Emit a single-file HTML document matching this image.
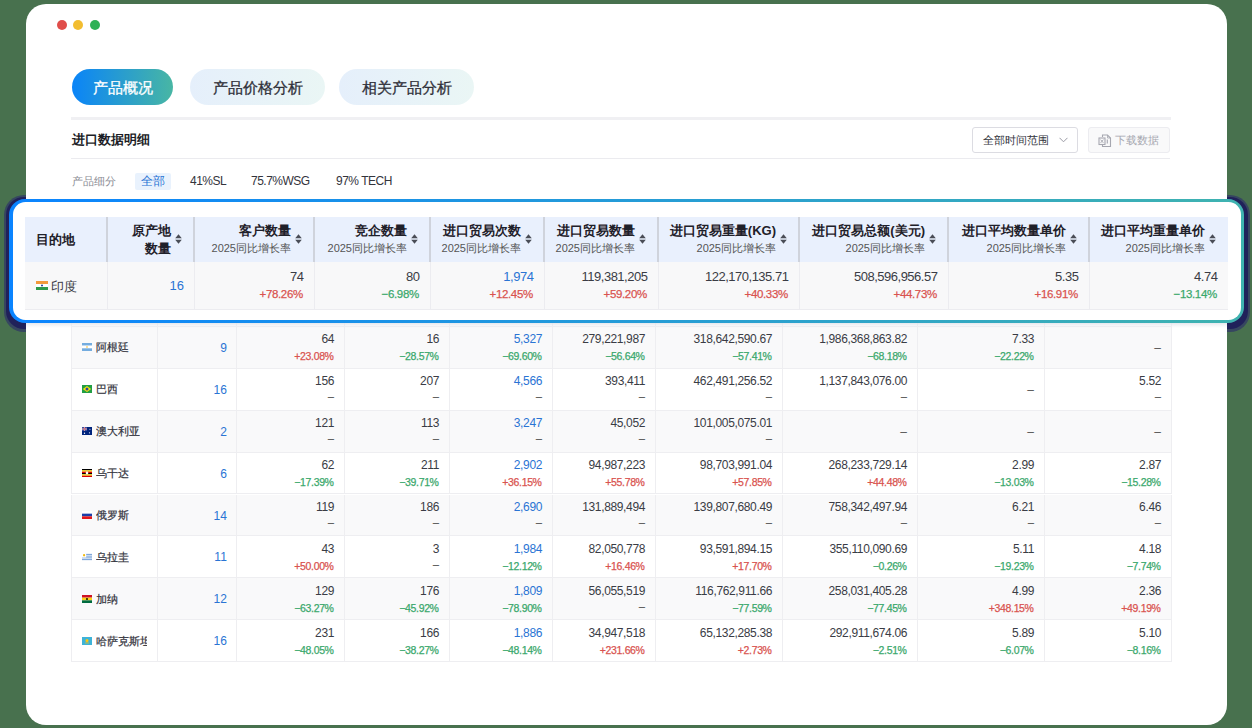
<!DOCTYPE html>
<html><head><meta charset="utf-8"><title>进口数据明细</title><style>
*{box-sizing:border-box}
html,body{margin:0;padding:0}
body{width:1252px;height:728px;background:#48714e;position:relative;overflow:hidden;font-family:"Liberation Sans",sans-serif;color:#33353d}
.card{position:absolute;left:26px;top:4px;width:1201px;height:721px;background:#fff;border-radius:20px;z-index:1}
.dot{position:absolute;top:20px;width:10px;height:10px;border-radius:50%;z-index:2}
.tab{position:absolute;top:69px;height:36px;border-radius:18px;font-size:15px;line-height:37.2px;text-align:center;z-index:2;color:#2f3039;-webkit-text-stroke:0.3px #2f3039}
.abs{position:absolute;z-index:2}
.ltab{position:absolute;z-index:2;background:#fff;border:1px solid #e9e9ee}
.lrow{position:absolute;left:71px;width:1100px;z-index:2;border-bottom:1px solid #eeeef1}
.vl{position:absolute;top:0;bottom:-1px;width:1px;background:#eeeef1}
.c{position:absolute;top:0;height:100%;text-align:right;padding-right:10px}
.n{position:absolute;right:9.95px;top:5.6px;font-size:12px;line-height:14px;color:#3a3c45;white-space:nowrap;letter-spacing:-0.35px}
.n.b{color:#2a74d4}
.p{position:absolute;right:10.4px;top:23.3px;font-size:10.5px;line-height:13px;white-space:nowrap;letter-spacing:-0.35px;-webkit-text-stroke:0.25px currentColor}
.p.r{color:#d9534f}.p.g{color:#3aa86c}.p.d{color:#555;margin-top:-1.5px}
.n1{position:absolute;right:10px;top:14px;font-size:12px;line-height:14px;color:#555}
.c0{position:absolute;top:0;height:100%;display:flex;align-items:center;padding-left:10px;white-space:nowrap;overflow:hidden;padding-right:10px}
.c0 .nm{font-size:11px;margin-left:3.5px;color:#33343d;overflow:hidden;-webkit-text-stroke:0.2px #33343d;position:relative;top:0.7px}
.c1{position:absolute;top:0;height:100%;text-align:right;padding-right:9.2px;font-size:12px;line-height:42px;color:#2a74d4}
.flag{display:block;flex:none}
.shadow{position:absolute;left:4px;top:195px;width:1246px;height:136.5px;border-radius:20px;background:#364660;z-index:0}
.shadow2{position:absolute;left:6px;top:196.5px;width:1241.5px;height:132px;border-radius:18px;background:#20215a;z-index:0}
.sband{position:absolute;left:26px;top:322px;width:1201px;height:6px;background:linear-gradient(rgba(222,225,232,0.9),rgba(235,237,242,0.5) 60%,rgba(240,242,246,0));z-index:2}
.hbox{position:absolute;left:9px;top:199px;width:1235px;height:124px;border-radius:16px;padding:3px 3.5px;background:linear-gradient(90deg,#0a84ff,#3fb3b0);z-index:3}
.hbox .in{width:100%;height:100%;background:#fff;border-radius:12.5px}
.hhead{position:absolute;z-index:4;background:#e9f0fd}
.hvl{position:absolute;top:0;height:100%;width:2px;background:#cfd3dc}
.h0{position:absolute;top:0;height:100%;line-height:45px;padding-left:11px;font-size:13px;font-weight:bold;color:#1f2029}
.h1,.hc{position:absolute;top:0;height:100%}
.ht2{position:absolute;right:23.5px;top:5px;font-size:13px;font-weight:bold;line-height:18px;text-align:right;color:#1f2029}
.ht{position:absolute;right:23px;top:5px;text-align:right;white-space:nowrap}
.ht b{display:block;font-size:13px;line-height:18px;color:#1f2029}
.hs{display:block;font-size:11px;line-height:17px;color:#555}
.si{position:absolute;right:12px;top:17px}
.hrow{position:absolute;z-index:4;background:#f8f8f9;border-bottom:1px solid #ececf0}
.rvl{position:absolute;top:0;height:100%;width:1px;background:#ececf0}
.hc0{position:absolute;top:0;height:100%;display:flex;align-items:center;padding-left:11px;white-space:nowrap}
.hc0 .nm{font-size:12.5px;margin-left:2.5px;color:#3a3c45;position:relative;top:1.5px}
.hc1{position:absolute;top:0;height:100%;text-align:right;padding-right:10px;font-size:13px;line-height:47px;color:#2a74d4}
.hcell{position:absolute;top:0;height:100%}
.hn{position:absolute;right:10.6px;top:6.7px;font-size:13px;line-height:16px;color:#3a3c45;white-space:nowrap;letter-spacing:-0.5px}
.hn.b{color:#2a74d4}
.hp{position:absolute;right:11.2px;top:25.3px;font-size:11.5px;line-height:14px;white-space:nowrap;letter-spacing:-0.35px;-webkit-text-stroke:0.25px currentColor}
.hp.r{color:#d9534f}.hp.g{color:#3aa86c}
</style></head>
<body>
<div class="shadow"></div><div class="shadow2"></div>
<div class="card"></div>
<div class="dot" style="left:57px;background:#e04e4a"></div>
<div class="dot" style="left:73px;background:#f2bd30"></div>
<div class="dot" style="left:90px;background:#2eb155"></div>
<div class="tab" style="left:72px;width:101px;background:linear-gradient(90deg,#0a84f8,#48b6a4);color:#fff;-webkit-text-stroke:0.3px #fff">产品概况</div>
<div class="tab" style="left:190px;width:135px;background:linear-gradient(90deg,#e5effb,#eaf6f5)">产品价格分析</div>
<div class="tab" style="left:339px;width:135px;background:linear-gradient(90deg,#e5effb,#eaf6f5)">相关产品分析</div>
<div class="abs" style="left:71px;top:117px;width:1100px;height:3px;background:#f0f0f3"></div>
<div class="abs" style="left:72px;top:130px;font-size:13px;font-weight:bold;line-height:20px;color:#1c1d26">进口数据明细</div>
<div class="abs" style="left:71px;top:158px;width:1099px;height:1px;background:#ebebef"></div>
<div class="abs" style="left:972px;top:127px;width:106px;height:26px;border:1px solid #dcdce2;border-radius:3px;background:#fff;font-size:11px;line-height:24px;padding-left:10px;color:#33343c">全部时间范围<svg style="position:absolute;left:86px;top:9px" width="9" height="6" viewBox="0 0 9 6"><path d="M0.5 0.8 L4.5 4.8 L8.5 0.8" fill="none" stroke="#9a9aa4" stroke-width="1"/></svg></div>
<div class="abs" style="left:1088px;top:127px;width:82px;height:26px;border:1px solid #ececf0;border-radius:3px;background:#f9f9fa;font-size:11px;line-height:24px;padding-left:26px;color:#a6a7b0"><svg style="position:absolute;left:9px;top:5.5px" width="14" height="14" viewBox="0 0 14 14"><path d="M4.5 3 V1 H9.5 L12.5 4 V12.5 H4.5 V11" fill="none" stroke="#a6a7b0" stroke-width="1.1"/><path d="M9.5 1 V4 H12.5" fill="none" stroke="#a6a7b0" stroke-width="0.8"/><rect x="1" y="4" width="6" height="6.5" fill="#f9f9fa" stroke="#a6a7b0" stroke-width="1.1"/><path d="M2.6 5.6 L5.4 8.9 M5.4 5.6 L2.6 8.9" stroke="#a6a7b0" stroke-width="0.9"/><path d="M9.3 5.5 V9.5" stroke="#a6a7b0" stroke-width="1.1"/></svg>下载数据</div>
<div class="abs" style="left:72px;top:173.8px;font-size:11px;line-height:14px;color:#8a8b93">产品细分</div>
<div class="abs" style="left:135px;top:173px;width:36px;height:17px;background:#e9f2fd;border-radius:2px;font-size:12px;line-height:17px;text-align:center;color:#2a74d4">全部</div>
<div class="abs" style="left:190px;top:174px;font-size:12px;line-height:14px;color:#33343c;letter-spacing:-0.5px">41%SL</div>
<div class="abs" style="left:251px;top:174px;font-size:12px;line-height:14px;color:#33343c;letter-spacing:-0.5px">75.7%WSG</div>
<div class="abs" style="left:336px;top:174px;font-size:12px;line-height:14px;color:#33343c;letter-spacing:-0.5px">97% TECH</div>
<div class="lrow" style="top:284.75px;height:41.95px;background:#fff">
<i class="vl" style="left:0px"></i>
<i class="vl" style="left:86px"></i>
<i class="vl" style="left:165px"></i>
<i class="vl" style="left:273px"></i>
<i class="vl" style="left:378px"></i>
<i class="vl" style="left:481px"></i>
<i class="vl" style="left:584px"></i>
<i class="vl" style="left:711px"></i>
<i class="vl" style="left:846px"></i>
<i class="vl" style="left:973px"></i>
<i class="vl" style="left:1100px"></i>
</div>
<div class="lrow" style="top:326.70px;height:41.95px;background:#f9f9fa">
<i class="vl" style="left:0px"></i>
<i class="vl" style="left:86px"></i>
<i class="vl" style="left:165px"></i>
<i class="vl" style="left:273px"></i>
<i class="vl" style="left:378px"></i>
<i class="vl" style="left:481px"></i>
<i class="vl" style="left:584px"></i>
<i class="vl" style="left:711px"></i>
<i class="vl" style="left:846px"></i>
<i class="vl" style="left:973px"></i>
<i class="vl" style="left:1100px"></i>
<div class="c0" style="left:1px;width:85px"><svg class="flag" width="10" height="8" viewBox="0 0 12 9" preserveAspectRatio="none"><rect width="12" height="3" fill="#74acdf"/><rect y="3" width="12" height="3" fill="#fff"/><rect y="6" width="12" height="3" fill="#74acdf"/><circle cx="6" cy="4.5" r="0.9" fill="#f6b40e"/></svg><span class="nm">阿根廷</span></div>
<div class="c1" style="left:86px;width:79px">9</div>
<div class="c" style="left:165px;width:108px"><span class="n">64</span><span class="p r">+23.08%</span></div>
<div class="c" style="left:273px;width:105px"><span class="n">16</span><span class="p g">−28.57%</span></div>
<div class="c" style="left:378px;width:103px"><span class="n b">5,327</span><span class="p g">−69.60%</span></div>
<div class="c" style="left:481px;width:103px"><span class="n">279,221,987</span><span class="p g">−56.64%</span></div>
<div class="c" style="left:584px;width:127px"><span class="n">318,642,590.67</span><span class="p g">−57.41%</span></div>
<div class="c" style="left:711px;width:135px"><span class="n">1,986,368,863.82</span><span class="p g">−68.18%</span></div>
<div class="c" style="left:846px;width:127px"><span class="n">7.33</span><span class="p g">−22.22%</span></div>
<div class="c" style="left:973px;width:127px"><span class="n1">–</span></div>
</div>
<div class="lrow" style="top:368.65px;height:41.95px;background:#ffffff">
<i class="vl" style="left:0px"></i>
<i class="vl" style="left:86px"></i>
<i class="vl" style="left:165px"></i>
<i class="vl" style="left:273px"></i>
<i class="vl" style="left:378px"></i>
<i class="vl" style="left:481px"></i>
<i class="vl" style="left:584px"></i>
<i class="vl" style="left:711px"></i>
<i class="vl" style="left:846px"></i>
<i class="vl" style="left:973px"></i>
<i class="vl" style="left:1100px"></i>
<div class="c0" style="left:1px;width:85px"><svg class="flag" width="10" height="8" viewBox="0 0 12 9" preserveAspectRatio="none"><rect width="12" height="9" fill="#229e45"/><path d="M6 1 L11 4.5 L6 8 L1 4.5Z" fill="#f8e509"/><circle cx="6" cy="4.5" r="1.8" fill="#2b49a3"/></svg><span class="nm">巴西</span></div>
<div class="c1" style="left:86px;width:79px">16</div>
<div class="c" style="left:165px;width:108px"><span class="n">156</span><span class="p d">–</span></div>
<div class="c" style="left:273px;width:105px"><span class="n">207</span><span class="p d">–</span></div>
<div class="c" style="left:378px;width:103px"><span class="n b">4,566</span><span class="p d">–</span></div>
<div class="c" style="left:481px;width:103px"><span class="n">393,411</span><span class="p d">–</span></div>
<div class="c" style="left:584px;width:127px"><span class="n">462,491,256.52</span><span class="p d">–</span></div>
<div class="c" style="left:711px;width:135px"><span class="n">1,137,843,076.00</span><span class="p d">–</span></div>
<div class="c" style="left:846px;width:127px"><span class="n1">–</span></div>
<div class="c" style="left:973px;width:127px"><span class="n">5.52</span><span class="p d">–</span></div>
</div>
<div class="lrow" style="top:410.60px;height:41.95px;background:#f9f9fa">
<i class="vl" style="left:0px"></i>
<i class="vl" style="left:86px"></i>
<i class="vl" style="left:165px"></i>
<i class="vl" style="left:273px"></i>
<i class="vl" style="left:378px"></i>
<i class="vl" style="left:481px"></i>
<i class="vl" style="left:584px"></i>
<i class="vl" style="left:711px"></i>
<i class="vl" style="left:846px"></i>
<i class="vl" style="left:973px"></i>
<i class="vl" style="left:1100px"></i>
<div class="c0" style="left:1px;width:85px"><svg class="flag" width="10" height="8" viewBox="0 0 12 9" preserveAspectRatio="none"><rect width="12" height="9" fill="#00247d"/><rect x="0" y="0" width="6" height="4.5" fill="#3a4f9f"/><path d="M0 2.2H6M3 0V4.5" stroke="#e8e8f0" stroke-width="1.2"/><path d="M0 2.2H6M3 0V4.5" stroke="#cf142b" stroke-width="0.5"/><circle cx="9" cy="6.5" r="0.7" fill="#fff"/><circle cx="3" cy="7" r="0.8" fill="#fff"/><circle cx="9.5" cy="2.5" r="0.6" fill="#fff"/></svg><span class="nm">澳大利亚</span></div>
<div class="c1" style="left:86px;width:79px">2</div>
<div class="c" style="left:165px;width:108px"><span class="n">121</span><span class="p d">–</span></div>
<div class="c" style="left:273px;width:105px"><span class="n">113</span><span class="p d">–</span></div>
<div class="c" style="left:378px;width:103px"><span class="n b">3,247</span><span class="p d">–</span></div>
<div class="c" style="left:481px;width:103px"><span class="n">45,052</span><span class="p d">–</span></div>
<div class="c" style="left:584px;width:127px"><span class="n">101,005,075.01</span><span class="p d">–</span></div>
<div class="c" style="left:711px;width:135px"><span class="n1">–</span></div>
<div class="c" style="left:846px;width:127px"><span class="n1">–</span></div>
<div class="c" style="left:973px;width:127px"><span class="n1">–</span></div>
</div>
<div class="lrow" style="top:452.55px;height:41.95px;background:#ffffff">
<i class="vl" style="left:0px"></i>
<i class="vl" style="left:86px"></i>
<i class="vl" style="left:165px"></i>
<i class="vl" style="left:273px"></i>
<i class="vl" style="left:378px"></i>
<i class="vl" style="left:481px"></i>
<i class="vl" style="left:584px"></i>
<i class="vl" style="left:711px"></i>
<i class="vl" style="left:846px"></i>
<i class="vl" style="left:973px"></i>
<i class="vl" style="left:1100px"></i>
<div class="c0" style="left:1px;width:85px"><svg class="flag" width="10" height="8" viewBox="0 0 12 9" preserveAspectRatio="none"><rect width="12" height="1.5" fill="#000"/><rect y="1.5" width="12" height="1.5" fill="#fcdc04"/><rect y="3" width="12" height="1.5" fill="#d90000"/><rect y="4.5" width="12" height="1.5" fill="#000"/><rect y="6" width="12" height="1.5" fill="#fcdc04"/><rect y="7.5" width="12" height="1.5" fill="#d90000"/><circle cx="6" cy="4.5" r="1.6" fill="#fff"/></svg><span class="nm">乌干达</span></div>
<div class="c1" style="left:86px;width:79px">6</div>
<div class="c" style="left:165px;width:108px"><span class="n">62</span><span class="p g">−17.39%</span></div>
<div class="c" style="left:273px;width:105px"><span class="n">211</span><span class="p g">−39.71%</span></div>
<div class="c" style="left:378px;width:103px"><span class="n b">2,902</span><span class="p r">+36.15%</span></div>
<div class="c" style="left:481px;width:103px"><span class="n">94,987,223</span><span class="p r">+55.78%</span></div>
<div class="c" style="left:584px;width:127px"><span class="n">98,703,991.04</span><span class="p r">+57.85%</span></div>
<div class="c" style="left:711px;width:135px"><span class="n">268,233,729.14</span><span class="p r">+44.48%</span></div>
<div class="c" style="left:846px;width:127px"><span class="n">2.99</span><span class="p g">−13.03%</span></div>
<div class="c" style="left:973px;width:127px"><span class="n">2.87</span><span class="p g">−15.28%</span></div>
</div>
<div class="lrow" style="top:494.50px;height:41.95px;background:#f9f9fa">
<i class="vl" style="left:0px"></i>
<i class="vl" style="left:86px"></i>
<i class="vl" style="left:165px"></i>
<i class="vl" style="left:273px"></i>
<i class="vl" style="left:378px"></i>
<i class="vl" style="left:481px"></i>
<i class="vl" style="left:584px"></i>
<i class="vl" style="left:711px"></i>
<i class="vl" style="left:846px"></i>
<i class="vl" style="left:973px"></i>
<i class="vl" style="left:1100px"></i>
<div class="c0" style="left:1px;width:85px"><svg class="flag" width="10" height="8" viewBox="0 0 12 9" preserveAspectRatio="none"><rect width="12" height="3" fill="#fff"/><rect y="3" width="12" height="3" fill="#1c3fa8"/><rect y="6" width="12" height="3" fill="#e4181c"/></svg><span class="nm">俄罗斯</span></div>
<div class="c1" style="left:86px;width:79px">14</div>
<div class="c" style="left:165px;width:108px"><span class="n">119</span><span class="p d">–</span></div>
<div class="c" style="left:273px;width:105px"><span class="n">186</span><span class="p d">–</span></div>
<div class="c" style="left:378px;width:103px"><span class="n b">2,690</span><span class="p d">–</span></div>
<div class="c" style="left:481px;width:103px"><span class="n">131,889,494</span><span class="p d">–</span></div>
<div class="c" style="left:584px;width:127px"><span class="n">139,807,680.49</span><span class="p d">–</span></div>
<div class="c" style="left:711px;width:135px"><span class="n">758,342,497.94</span><span class="p d">–</span></div>
<div class="c" style="left:846px;width:127px"><span class="n">6.21</span><span class="p d">–</span></div>
<div class="c" style="left:973px;width:127px"><span class="n">6.46</span><span class="p d">–</span></div>
</div>
<div class="lrow" style="top:536.45px;height:41.95px;background:#ffffff">
<i class="vl" style="left:0px"></i>
<i class="vl" style="left:86px"></i>
<i class="vl" style="left:165px"></i>
<i class="vl" style="left:273px"></i>
<i class="vl" style="left:378px"></i>
<i class="vl" style="left:481px"></i>
<i class="vl" style="left:584px"></i>
<i class="vl" style="left:711px"></i>
<i class="vl" style="left:846px"></i>
<i class="vl" style="left:973px"></i>
<i class="vl" style="left:1100px"></i>
<div class="c0" style="left:1px;width:85px"><svg class="flag" width="10" height="8" viewBox="0 0 12 9" preserveAspectRatio="none"><rect width="12" height="9" fill="#fff"/><rect y="1" width="12" height="1" fill="#5d8fd0"/><rect y="3" width="12" height="1" fill="#5d8fd0"/><rect y="5" width="12" height="1" fill="#5d8fd0"/><rect y="7" width="12" height="1" fill="#5d8fd0"/><rect width="5" height="5" fill="#fff"/><circle cx="2.5" cy="2.5" r="1.3" fill="#f2b705"/></svg><span class="nm">乌拉圭</span></div>
<div class="c1" style="left:86px;width:79px">11</div>
<div class="c" style="left:165px;width:108px"><span class="n">43</span><span class="p r">+50.00%</span></div>
<div class="c" style="left:273px;width:105px"><span class="n">3</span><span class="p d">–</span></div>
<div class="c" style="left:378px;width:103px"><span class="n b">1,984</span><span class="p g">−12.12%</span></div>
<div class="c" style="left:481px;width:103px"><span class="n">82,050,778</span><span class="p r">+16.46%</span></div>
<div class="c" style="left:584px;width:127px"><span class="n">93,591,894.15</span><span class="p r">+17.70%</span></div>
<div class="c" style="left:711px;width:135px"><span class="n">355,110,090.69</span><span class="p g">−0.26%</span></div>
<div class="c" style="left:846px;width:127px"><span class="n">5.11</span><span class="p g">−19.23%</span></div>
<div class="c" style="left:973px;width:127px"><span class="n">4.18</span><span class="p g">−7.74%</span></div>
</div>
<div class="lrow" style="top:578.40px;height:41.95px;background:#f9f9fa">
<i class="vl" style="left:0px"></i>
<i class="vl" style="left:86px"></i>
<i class="vl" style="left:165px"></i>
<i class="vl" style="left:273px"></i>
<i class="vl" style="left:378px"></i>
<i class="vl" style="left:481px"></i>
<i class="vl" style="left:584px"></i>
<i class="vl" style="left:711px"></i>
<i class="vl" style="left:846px"></i>
<i class="vl" style="left:973px"></i>
<i class="vl" style="left:1100px"></i>
<div class="c0" style="left:1px;width:85px"><svg class="flag" width="10" height="8" viewBox="0 0 12 9" preserveAspectRatio="none"><rect width="12" height="3" fill="#ce1126"/><rect y="3" width="12" height="3" fill="#fcd116"/><rect y="6" width="12" height="3" fill="#006b3f"/><circle cx="6" cy="4.5" r="1.1" fill="#000"/></svg><span class="nm">加纳</span></div>
<div class="c1" style="left:86px;width:79px">12</div>
<div class="c" style="left:165px;width:108px"><span class="n">129</span><span class="p g">−63.27%</span></div>
<div class="c" style="left:273px;width:105px"><span class="n">176</span><span class="p g">−45.92%</span></div>
<div class="c" style="left:378px;width:103px"><span class="n b">1,809</span><span class="p g">−78.90%</span></div>
<div class="c" style="left:481px;width:103px"><span class="n">56,055,519</span><span class="p d">–</span></div>
<div class="c" style="left:584px;width:127px"><span class="n">116,762,911.66</span><span class="p g">−77.59%</span></div>
<div class="c" style="left:711px;width:135px"><span class="n">258,031,405.28</span><span class="p g">−77.45%</span></div>
<div class="c" style="left:846px;width:127px"><span class="n">4.99</span><span class="p r">+348.15%</span></div>
<div class="c" style="left:973px;width:127px"><span class="n">2.36</span><span class="p r">+49.19%</span></div>
</div>
<div class="lrow" style="top:620.35px;height:41.95px;background:#ffffff">
<i class="vl" style="left:0px"></i>
<i class="vl" style="left:86px"></i>
<i class="vl" style="left:165px"></i>
<i class="vl" style="left:273px"></i>
<i class="vl" style="left:378px"></i>
<i class="vl" style="left:481px"></i>
<i class="vl" style="left:584px"></i>
<i class="vl" style="left:711px"></i>
<i class="vl" style="left:846px"></i>
<i class="vl" style="left:973px"></i>
<i class="vl" style="left:1100px"></i>
<div class="c0" style="left:1px;width:85px"><svg class="flag" width="10" height="8" viewBox="0 0 12 9" preserveAspectRatio="none"><rect width="12" height="9" fill="#3eb3d8"/><circle cx="6" cy="4" r="1.8" fill="#fec50c"/><rect x="3.5" y="6.3" width="5" height="0.8" fill="#fec50c"/></svg><span class="nm">哈萨克斯坦</span></div>
<div class="c1" style="left:86px;width:79px">16</div>
<div class="c" style="left:165px;width:108px"><span class="n">231</span><span class="p g">−48.05%</span></div>
<div class="c" style="left:273px;width:105px"><span class="n">166</span><span class="p g">−38.27%</span></div>
<div class="c" style="left:378px;width:103px"><span class="n b">1,886</span><span class="p g">−48.14%</span></div>
<div class="c" style="left:481px;width:103px"><span class="n">34,947,518</span><span class="p r">+231.66%</span></div>
<div class="c" style="left:584px;width:127px"><span class="n">65,132,285.38</span><span class="p r">+2.73%</span></div>
<div class="c" style="left:711px;width:135px"><span class="n">292,911,674.06</span><span class="p g">−2.51%</span></div>
<div class="c" style="left:846px;width:127px"><span class="n">5.89</span><span class="p g">−6.07%</span></div>
<div class="c" style="left:973px;width:127px"><span class="n">5.10</span><span class="p g">−8.16%</span></div>
</div>
<div class="sband"></div>
<div class="hbox"><div class="in"></div></div>
<div class="hhead" style="left:25px;top:217px;width:1203px;height:45px">
<div class="h0" style="left:0;width:82px">目的地</div>
<i class="hvl" style="left:81px"></i>
<i class="hvl" style="left:168px"></i>
<i class="hvl" style="left:288px"></i>
<i class="hvl" style="left:404px"></i>
<i class="hvl" style="left:518px"></i>
<i class="hvl" style="left:632px"></i>
<i class="hvl" style="left:773px"></i>
<i class="hvl" style="left:922px"></i>
<i class="hvl" style="left:1063px"></i>
<div class="h1" style="left:82px;width:87px"><span class="ht2">原产地<br>数量</span><svg class="si" width="7" height="10" viewBox="0 0 7 10"><path d="M3.5 0.3 L6.8 4.3 H0.2Z M3.5 9.7 L6.8 5.7 H0.2Z" fill="#4a4d57"/></svg></div>
<div class="hc" style="left:169px;width:120px"><span class="ht"><b>客户数量</b><span class="hs">2025同比增长率</span></span><svg class="si" width="7" height="10" viewBox="0 0 7 10"><path d="M3.5 0.3 L6.8 4.3 H0.2Z M3.5 9.7 L6.8 5.7 H0.2Z" fill="#4a4d57"/></svg></div>
<div class="hc" style="left:289px;width:116px"><span class="ht"><b>竞企数量</b><span class="hs">2025同比增长率</span></span><svg class="si" width="7" height="10" viewBox="0 0 7 10"><path d="M3.5 0.3 L6.8 4.3 H0.2Z M3.5 9.7 L6.8 5.7 H0.2Z" fill="#4a4d57"/></svg></div>
<div class="hc" style="left:405px;width:114px"><span class="ht"><b>进口贸易次数</b><span class="hs">2025同比增长率</span></span><svg class="si" width="7" height="10" viewBox="0 0 7 10"><path d="M3.5 0.3 L6.8 4.3 H0.2Z M3.5 9.7 L6.8 5.7 H0.2Z" fill="#4a4d57"/></svg></div>
<div class="hc" style="left:519px;width:114px"><span class="ht"><b>进口贸易数量</b><span class="hs">2025同比增长率</span></span><svg class="si" width="7" height="10" viewBox="0 0 7 10"><path d="M3.5 0.3 L6.8 4.3 H0.2Z M3.5 9.7 L6.8 5.7 H0.2Z" fill="#4a4d57"/></svg></div>
<div class="hc" style="left:633px;width:141px"><span class="ht"><b>进口贸易重量(KG)</b><span class="hs">2025同比增长率</span></span><svg class="si" width="7" height="10" viewBox="0 0 7 10"><path d="M3.5 0.3 L6.8 4.3 H0.2Z M3.5 9.7 L6.8 5.7 H0.2Z" fill="#4a4d57"/></svg></div>
<div class="hc" style="left:774px;width:149px"><span class="ht"><b>进口贸易总额(美元)</b><span class="hs">2025同比增长率</span></span><svg class="si" width="7" height="10" viewBox="0 0 7 10"><path d="M3.5 0.3 L6.8 4.3 H0.2Z M3.5 9.7 L6.8 5.7 H0.2Z" fill="#4a4d57"/></svg></div>
<div class="hc" style="left:923px;width:141px"><span class="ht"><b>进口平均数量单价</b><span class="hs">2025同比增长率</span></span><svg class="si" width="7" height="10" viewBox="0 0 7 10"><path d="M3.5 0.3 L6.8 4.3 H0.2Z M3.5 9.7 L6.8 5.7 H0.2Z" fill="#4a4d57"/></svg></div>
<div class="hc" style="left:1064px;width:139px"><span class="ht"><b>进口平均重量单价</b><span class="hs">2025同比增长率</span></span><svg class="si" width="7" height="10" viewBox="0 0 7 10"><path d="M3.5 0.3 L6.8 4.3 H0.2Z M3.5 9.7 L6.8 5.7 H0.2Z" fill="#4a4d57"/></svg></div>
</div>
<div class="hrow" style="left:25px;top:262px;width:1203px;height:48px">
<i class="rvl" style="left:82px"></i>
<i class="rvl" style="left:169px"></i>
<i class="rvl" style="left:289px"></i>
<i class="rvl" style="left:405px"></i>
<i class="rvl" style="left:519px"></i>
<i class="rvl" style="left:633px"></i>
<i class="rvl" style="left:774px"></i>
<i class="rvl" style="left:923px"></i>
<i class="rvl" style="left:1064px"></i>
<div class="hc0" style="left:0;width:82px"><svg class="flag" width="12" height="9" viewBox="0 0 12 9" preserveAspectRatio="none"><rect width="12" height="3" fill="#f39a3c"/><rect y="3" width="12" height="3" fill="#fff"/><rect y="6" width="12" height="3" fill="#2e9a4a"/><circle cx="6" cy="4.5" r="1" fill="#1f3f8f"/></svg><span class="nm">印度</span></div>
<div class="hc1" style="left:82px;width:87px">16</div>
<div class="hcell" style="left:169px;width:120px"><span class="hn">74</span><span class="hp r">+78.26%</span></div>
<div class="hcell" style="left:289px;width:116px"><span class="hn">80</span><span class="hp g">−6.98%</span></div>
<div class="hcell" style="left:405px;width:114px"><span class="hn b">1,974</span><span class="hp r">+12.45%</span></div>
<div class="hcell" style="left:519px;width:114px"><span class="hn">119,381,205</span><span class="hp r">+59.20%</span></div>
<div class="hcell" style="left:633px;width:141px"><span class="hn">122,170,135.71</span><span class="hp r">+40.33%</span></div>
<div class="hcell" style="left:774px;width:149px"><span class="hn">508,596,956.57</span><span class="hp r">+44.73%</span></div>
<div class="hcell" style="left:923px;width:141px"><span class="hn">5.35</span><span class="hp r">+16.91%</span></div>
<div class="hcell" style="left:1064px;width:139px"><span class="hn">4.74</span><span class="hp g">−13.14%</span></div>
</div>
</body></html>
